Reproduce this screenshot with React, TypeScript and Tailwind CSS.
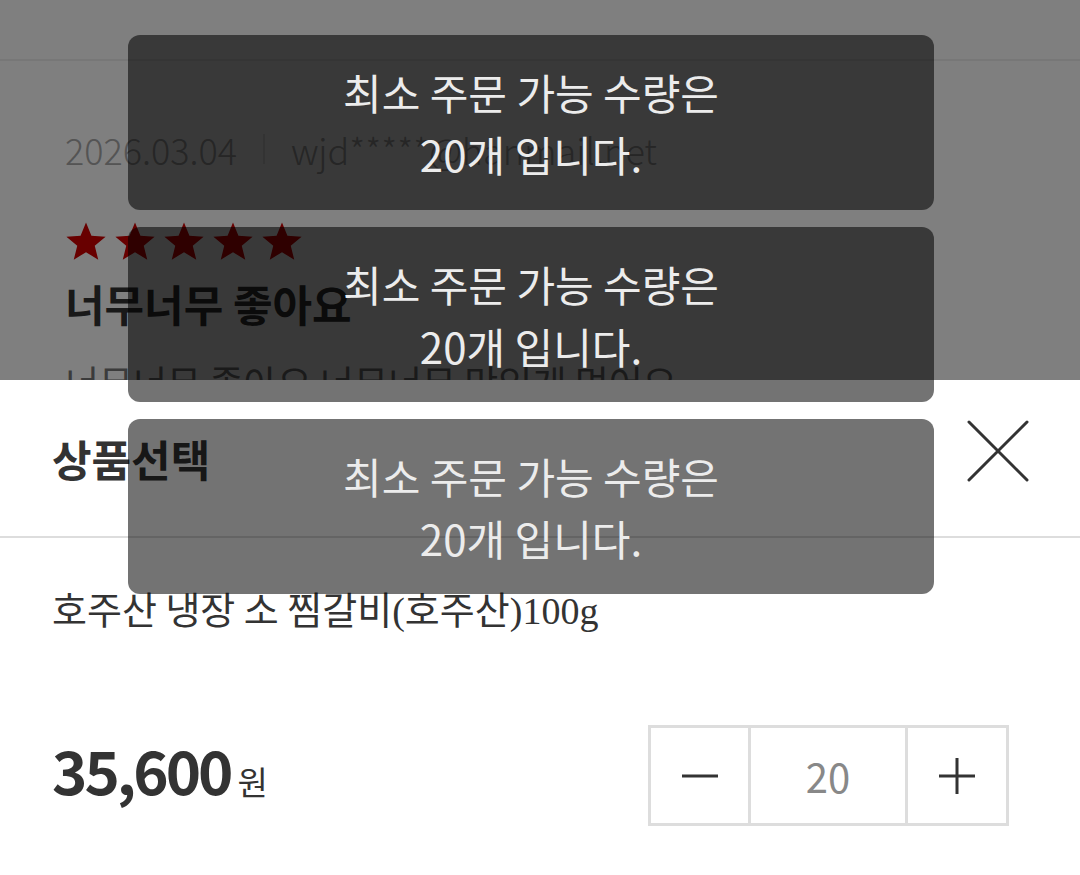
import React from "react";

const kr = "font-['Noto_Sans_CJK_KR','Noto_Sans',sans-serif]";

function Star() {
  return (
    <svg width="42" height="42" viewBox="0 0 24 24" className="shrink-0">
      <path
        d="M12 0.8l3.1 7.6 8.1.55-6.2 5.2 2 8-7-4.35-7 4.35 2-8-6.2-5.2 8.1-.55z"
        fill="#d00000"
      />
    </svg>
  );
}

function Toast() {
  return (
    <div className="flex h-[175px] flex-col items-center justify-center rounded-xl bg-black/55">
      <p className={`${kr} text-center text-[42px] leading-[62px] text-[#ececec]`}>
        최소 주문 가능 수량은
        <br />
        20개 입니다.
      </p>
    </div>
  );
}

export default function App() {
  return (
    <div className={`${kr} relative h-[875px] w-[1080px] overflow-hidden bg-white`}>
      {/* review page behind the sheet */}
      <div className="flex flex-col">
        <div className="h-[61px] border-b-2 border-[#eeeeee]" />
        <div className="flex flex-col px-[65px] pt-[66px]">
          <div className="flex items-center text-[36px] font-light leading-[44px] text-[#a8a8a8]">
            <span>2026.03.04</span>
            <span className="mx-[26px] h-[30px] w-[2px] bg-[#e4e4e4]" />
            <span>wjd*****@hanmail.net</span>
          </div>
          <div className="mt-[50px] flex gap-[7px]">
            <Star />
            <Star />
            <Star />
            <Star />
            <Star />
          </div>
          <h2 className="mt-[14px] text-[43px] font-bold leading-[52px] text-[#333333]">
            너무너무 좋아요
          </h2>
          <p className="mt-[29px] text-[37px] leading-[48px] text-[#777777]">
            너무너무 좋아요 너무너무 맛있게 먹어요
          </p>
        </div>
      </div>

      {/* dim overlay */}
      <div className="absolute inset-0 bg-black/50" />

      {/* bottom sheet */}
      <div className="absolute bottom-0 left-0 right-0 flex h-[495px] flex-col bg-white">
        <div className="flex h-[158px] items-center justify-between border-b-2 border-[#dddddd] pl-[52px] pr-[50px]">
          <h3 className="text-[43px] font-bold text-[#333333]">상품선택</h3>
          <svg width="64" height="64" viewBox="0 0 64 64" className="mb-[14px]">
            <path d="M3 3L61 61M61 3L3 61" stroke="#333333" strokeWidth="3" strokeLinecap="round" />
          </svg>
        </div>
        <p className="pl-[52px] pt-[46px] font-['Liberation_Serif','Noto_Sans_CJK_KR',serif] text-[38px] leading-[48px] text-[#333333]">
          <span className={kr}>호주산 냉장 소 찜갈비</span>(<span className={kr}>호주산</span>)100g
        </p>
        <div className="mt-[90px] flex items-center justify-between pl-[52px] pr-[71px]">
          <div className="flex items-baseline pb-[14px] text-[#333333]">
            <span className="text-[60px] font-bold leading-none tracking-[-3px]">35,600</span>
            <span className="ml-[7px] text-[33px] leading-none">원</span>
          </div>
          <div className="flex h-[101px] w-[361px] border-[3px] border-[#dddddd]">
            <div className="flex w-[100px] items-center justify-center border-r-[3px] border-[#dddddd]">
              <svg width="36" height="4" viewBox="0 0 36 4">
                <path d="M0 2H36" stroke="#333333" strokeWidth="3" />
              </svg>
            </div>
            <div className="flex w-[154px] items-center justify-center text-[40px] text-[#888888]">
              20
            </div>
            <div className="flex flex-1 items-center justify-center border-l-[3px] border-[#dddddd]">
              <svg width="36" height="36" viewBox="0 0 36 36">
                <path d="M0 18H36M18 0V36" stroke="#333333" strokeWidth="3" />
              </svg>
            </div>
          </div>
        </div>
      </div>

      {/* toasts */}
      <div className="absolute left-[128px] top-[35px] flex w-[806px] flex-col gap-[17px]">
        <Toast />
        <Toast />
        <Toast />
      </div>
    </div>
  );
}
